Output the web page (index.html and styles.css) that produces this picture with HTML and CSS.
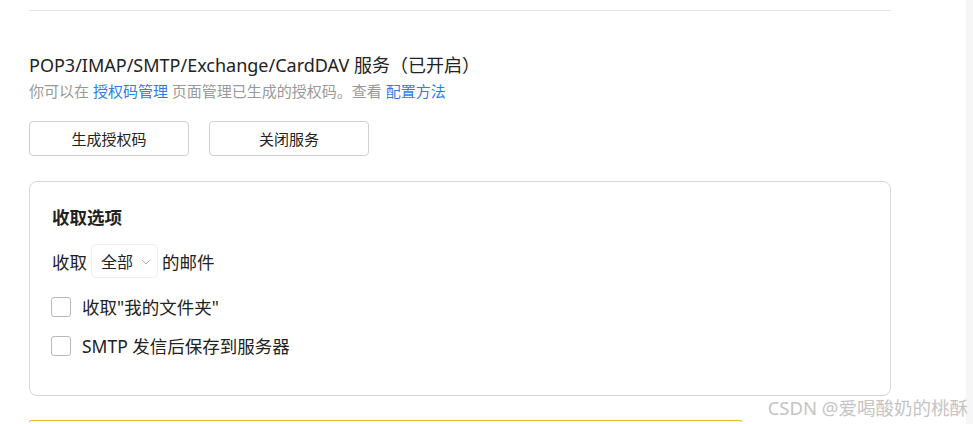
FILE: index.html
```html
<!DOCTYPE html>
<html lang="zh-CN">
<head>
    <meta charset="UTF-8">
    <meta name="viewport" content="width=device-width, initial-scale=1.0">
    <title>账户设置</title>
    <link rel="stylesheet" href="styles.css">
</head>
<body>
    <div class="page">
        <div class="content">
            <div class="divider"></div>

            <!-- Service section -->
            <div class="service">
                <h2 class="service-title">POP3/IMAP/SMTP/Exchange/CardDAV 服务（已开启）</h2>
                <p class="service-desc">你可以在 <a href="#">授权码管理</a> 页面管理已生成的授权码。查看 <a href="#">配置方法</a></p>
                <div class="actions">
                    <button type="button" class="btn">生成授权码</button>
                    <button type="button" class="btn">关闭服务</button>
                </div>
            </div>

            <!-- Receive options -->
            <div class="card">
                <h3 class="card-title">收取选项</h3>
                <div class="receive-row">
                    <span>收取</span>
                    <span class="select">全部
                        <svg class="chevron" width="10" height="6" viewBox="0 0 10 6"><path d="M1 1l4 4 4-4" fill="none" stroke="#aaa" stroke-width="1"/></svg>
                    </span>
                    <span>的邮件</span>
                </div>
                <label class="check-row"><span class="checkbox"></span>收取"我的文件夹"</label>
                <label class="check-row"><span class="checkbox"></span>SMTP 发信后保存到服务器</label>
            </div>

            <div class="notice"></div>
        </div>
        <div class="scrollbar"></div>
    </div>
    <div class="watermark">CSDN @爱喝酸奶的桃酥</div>
</body>
</html>
```

FILE: styles.css
```css
body {
    margin: 0;
    font-family: "Noto Sans", "Noto Sans CJK SC", sans-serif;
    color: #222;
    background-color: #fff;
    height: 424px;
    overflow: hidden;
}
.page {
    display: flex;
    height: 100%;
}
.content {
    flex: 1;
    padding: 10px 0 0 29px;
}
.scrollbar {
    width: 7px;
    background-color: #f6f6f7;
}
.divider {
    width: 862px;
    height: 1px;
    background-color: #e6e6e6;
}
.service {
    margin-top: 41px;
}
.service-title {
    margin: 0;
    font-size: 18px;
    font-weight: normal;
    line-height: 26px;
}
.service-desc {
    margin: 3px 0 0;
    font-size: 15px;
    line-height: 21px;
    color: #999;
}
.service-desc a {
    color: #2f7bea;
    text-decoration: none;
}
.actions {
    display: flex;
    gap: 20px;
    margin-top: 19px;
}
.btn {
    width: 160px;
    height: 35px;
    background-color: #fff;
    border: 1px solid #d0d0d0;
    border-radius: 4px;
    font-family: inherit;
    font-size: 15px;
    color: #222;
}
.card {
    width: 862px;
    height: 215px;
    margin-top: 25px;
    border: 1px solid #d6d6d9;
    border-radius: 8px;
    padding: 22px 0 0 22px;
    box-sizing: border-box;
}
.card-title {
    margin: 0;
    font-size: 17.5px;
    font-weight: bold;
    line-height: 26px;
}
.receive-row {
    display: flex;
    align-items: center;
    gap: 4px;
    margin-top: 14px;
    font-size: 17.5px;
}
.select {
    display: flex;
    align-items: center;
    gap: 8px;
    height: 34px;
    width: 67px;
    padding: 0 0 0 9px;
    border: 1px solid #eceef0;
    border-radius: 5px;
    box-sizing: border-box;
    font-size: 16px;
}
.chevron {
    margin-top: 1px;
}
.check-row {
    display: flex;
    align-items: center;
    gap: 11px;
    margin-top: 18px;
    font-size: 17.5px;
    line-height: 22px;
}
.check-row + .check-row {
    margin-top: 17px;
}
.checkbox {
    width: 18px;
    height: 18px;
    border: 1px solid #b8b8b8;
    border-radius: 3px;
    margin-left: -1px;
}
.notice {
    width: 711px;
    height: 1px;
    margin-top: 24px;
    border: 1px solid #ecb82e;
    border-bottom: none;
    border-radius: 6px 6px 0 0;
    background-color: #fffbeb;
}
.watermark {
    position: absolute;
    right: 5px;
    top: 394px;
    font-size: 18.5px;
    color: #c4c4c4;
    text-shadow: 0 0 1px #fff;
}
```
